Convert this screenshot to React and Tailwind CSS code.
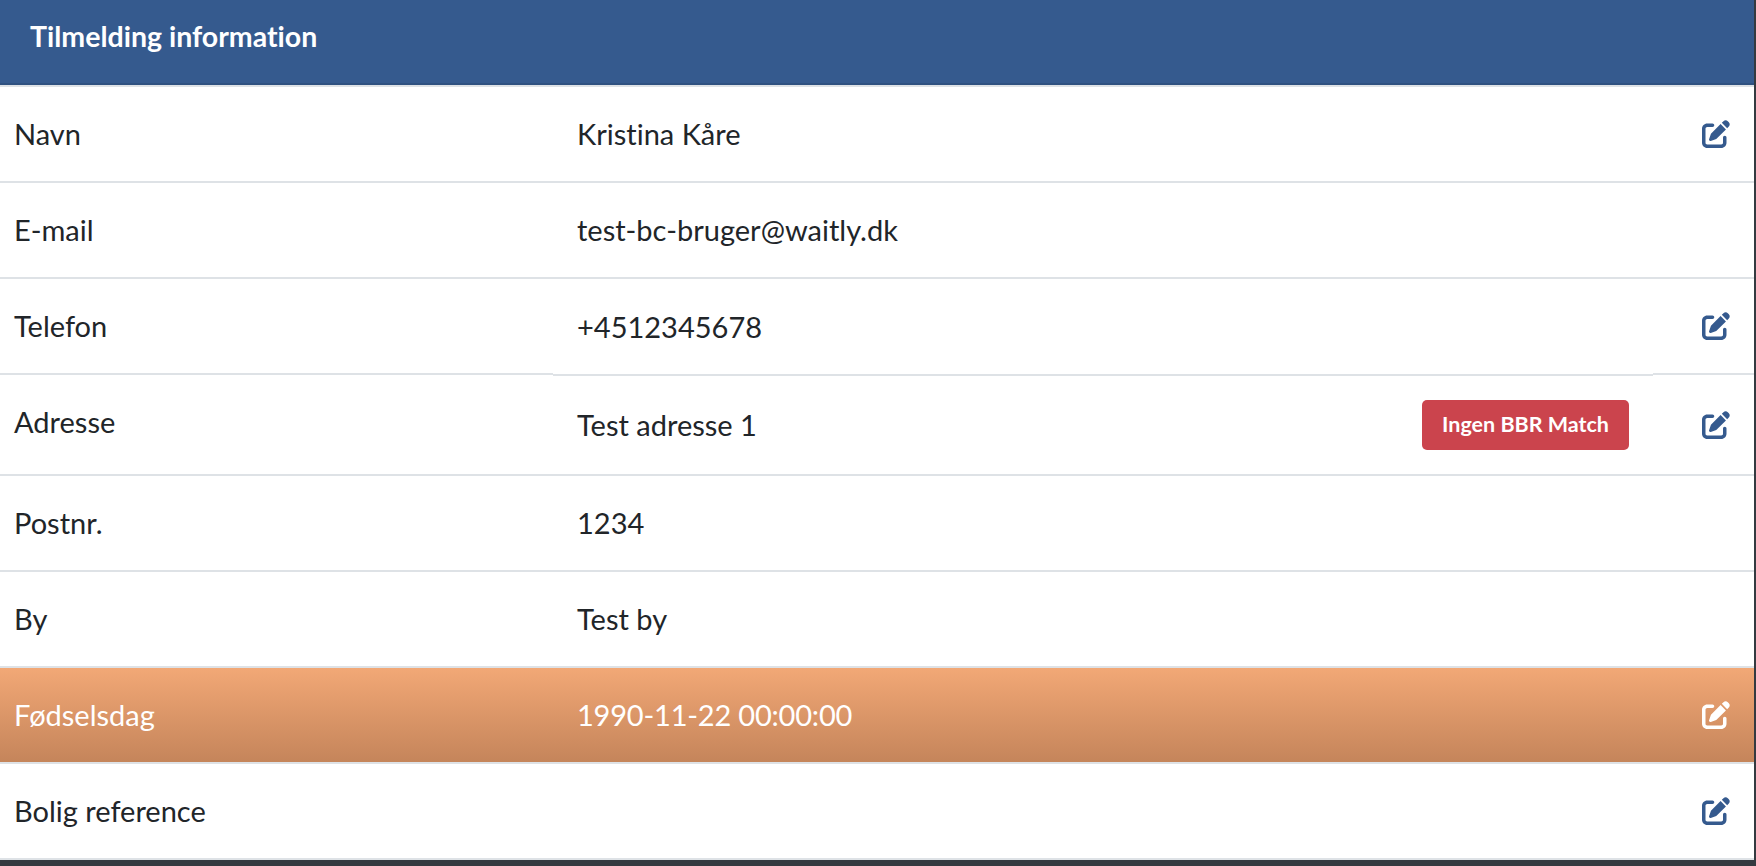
import { FaPenToSquare } from "react-icons/fa6";

const rows = [
  { label: "Navn", value: "Kristina Kåre", edit: true },
  { label: "E-mail", value: "test-bc-bruger@waitly.dk" },
  { label: "Telefon", value: "+4512345678", edit: true, shiftLine: true },
  { label: "Adresse", value: "Test adresse 1", edit: true, badge: "Ingen BBR Match" },
  { label: "Postnr.", value: "1234" },
  { label: "By", value: "Test by" },
  { label: "Fødselsdag", value: "1990-11-22 00:00:00", edit: true, highlight: true },
  { label: "Bolig reference", value: "", edit: true },
];

const Row = ({ row }) => {
  const tall = Boolean(row.badge);
  return (
    <div
      className={`flex ${tall ? "h-[101px]" : "h-[96px]"} ${
        row.highlight
          ? "bg-gradient-to-b from-[#f2a876] to-[#c4845a] text-white"
          : "bg-white text-[#212529]"
      }`}
    >
      <div className="flex w-[553px] shrink-0 items-center border-b-2 border-[#dee2e6] pl-[14px]">
        <span className={tall ? "-mt-[6px]" : ""}>{row.label}</span>
      </div>
      <div
        className={`flex flex-1 items-center justify-between border-b-2 border-[#dee2e6] pl-[24px] pr-[24px] ${
          row.shiftLine ? "relative z-10 h-[97px]" : ""
        }`}
      >
        <span className={row.highlight ? "tracking-[-0.2px]" : ""}>{row.value}</span>
        {row.badge && (
          <span className="flex h-[50px] w-[207px] items-center justify-center rounded-[5px] bg-[#cb444d] text-[21.5px] font-bold text-white">
            {row.badge}
          </span>
        )}
      </div>
      <div className="flex w-[101px] shrink-0 items-center border-b-2 border-[#dee2e6] pl-[49px]">
        {row.edit && (
          <FaPenToSquare
            className={`h-[28px] w-[28px] ${row.highlight ? "text-white" : "text-[#355a8e]"}`}
          />
        )}
      </div>
    </div>
  );
};

const App = () => {
  return (
    <div className="h-[866px] w-[1756px] overflow-hidden bg-[#343a40] font-['Lato',sans-serif] text-[29px] [font-variant-ligatures:none]">
      <div className="mr-[2px] bg-[#f0f3f6]">
        <div className="border-b-2 border-[#dee2e6]">
          <div className="flex h-[85px] items-center border-b-2 border-[#2f5180] bg-[#355a8e] pb-[10px] pl-[30px] text-[28.5px] font-bold text-white">
            Tilmelding information
          </div>
        </div>
        {rows.map((row) => (
          <Row key={row.label} row={row} />
        ))}
      </div>
    </div>
  );
};

export default App;
